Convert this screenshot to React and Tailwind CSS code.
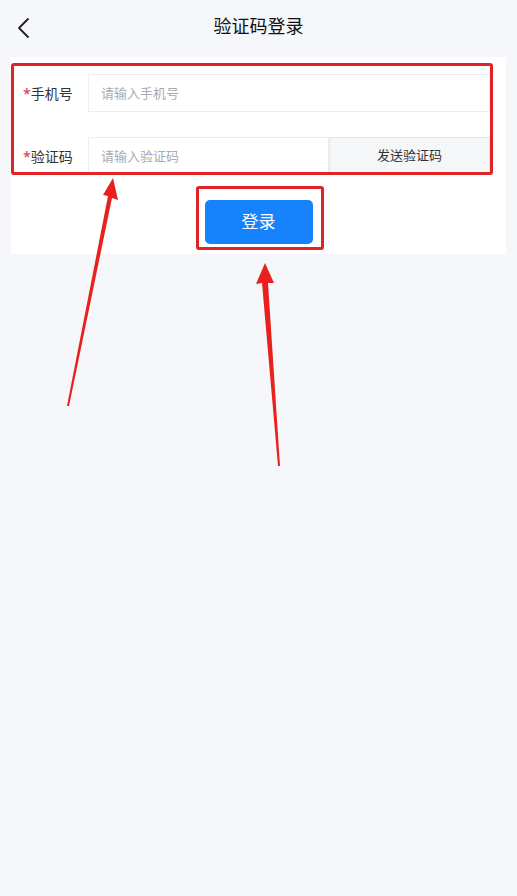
import React from 'react';

// Verification-code login page, with the red annotation marks on top
export default function App() {
  return (
    <div
      className="relative min-h-[896px] w-full bg-[#f5f7fa] text-[#222]"
      style={{ fontFamily: '"Noto Sans", "Noto Sans CJK SC", sans-serif' }}
    >
      {/* Header */}
      <div className="relative flex h-[52px] items-center justify-center">
        <button className="absolute left-[12px] top-[13px] p-1">
          <svg width="16" height="22" viewBox="0 0 16 22" fill="none">
            <path d="M12 2 L3 11 L12 20" stroke="#222" strokeWidth="1.8" strokeLinecap="round" strokeLinejoin="round" />
          </svg>
        </button>
        <h1 className="text-[18px] font-normal text-[#111]">验证码登录</h1>
      </div>

      {/* Form card */}
      <div className="mx-[11px] mt-[5px] bg-white pt-[17px] pb-[10px]">
        <div className="flex items-center pl-[12px] pr-[16px]">
          <label className="w-[65px] shrink-0 text-[14px] text-[#333]">
            <span className="text-[#d9363e]">*</span>手机号
          </label>
          <input
            className="h-[38px] min-w-0 flex-1 border border-[#eceef1] px-[12px] text-[13px] outline-none placeholder:text-[#a8abb2]"
            placeholder="请输入手机号"
          />
        </div>
        <div className="mt-[25px] flex items-center pl-[12px] pr-[16px]">
          <label className="w-[65px] shrink-0 text-[14px] text-[#333]">
            <span className="text-[#d9363e]">*</span>验证码
          </label>
          <input
            className="h-[38px] w-[241px] shrink-0 border border-[#eceef1] px-[12px] text-[13px] outline-none placeholder:text-[#a8abb2]"
            placeholder="请输入验证码"
          />
          <button className="h-[38px] flex-1 border border-[#e4e6ea] bg-[#f5f6f7] text-[13px] text-[#333]">
            发送验证码
          </button>
        </div>
        <div className="mt-[25px] flex justify-center">
          <button className="h-[44px] w-[108px] rounded-[5px] bg-[#1683fc] text-[17px] text-white">
            登录
          </button>
        </div>
      </div>

      {/* Annotation boxes */}
      <div className="pointer-events-none absolute left-[11px] top-[63px] h-[112px] w-[482px] rounded-[3px] border-[3px] border-[#e02424]" />
      <div className="pointer-events-none absolute left-[196px] top-[186px] h-[64px] w-[128px] rounded-[3px] border-[3px] border-[#e02424]" />

      {/* Annotation arrows */}
      <svg className="pointer-events-none absolute left-0 top-0" width="517" height="500" viewBox="0 0 517 500">
        <polygon points="67,406 108,196 103,195 113,178 118,200 112,198 69,406" fill="#e8211f" />
        <polygon points="278,466 262,283 256,284 265,263 274,283 268,283 280,466" fill="#e8211f" />
      </svg>
    </div>
  );
}
